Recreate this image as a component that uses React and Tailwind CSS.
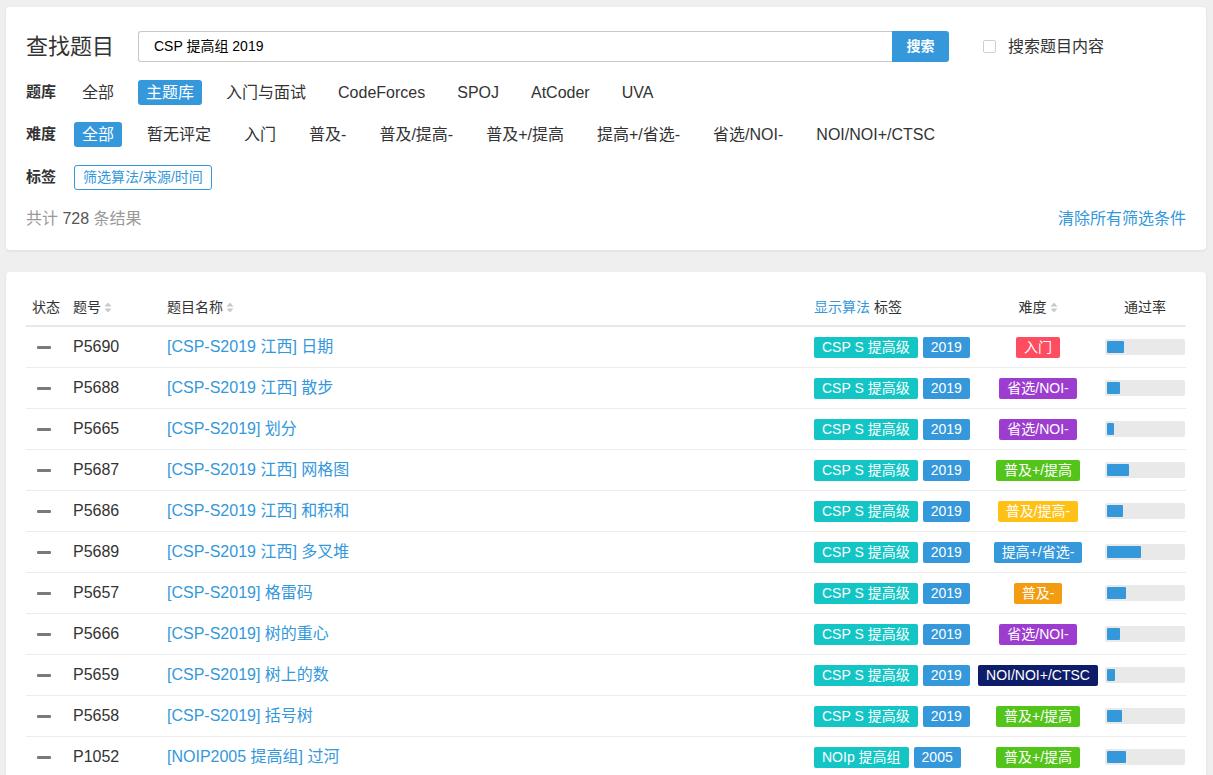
import React from "react";

const FONT = { fontFamily: '"Liberation Sans", "Noto Sans CJK SC", sans-serif' };

const BANKS = ["全部", "主题库", "入门与面试", "CodeForces", "SPOJ", "AtCoder", "UVA"];
const DIFFS = ["全部", "暂无评定", "入门", "普及-", "普及/提高-", "普及+/提高", "提高+/省选-", "省选/NOI-", "NOI/NOI+/CTSC"];

const DIFF_CLASS = {
  "入门": "bg-[#fe4c61]",
  "普及-": "bg-[#f39c11]",
  "普及/提高-": "bg-[#ffc116]",
  "普及+/提高": "bg-[#52c41a]",
  "提高+/省选-": "bg-[#3498db]",
  "省选/NOI-": "bg-[#9d3dcf]",
  "NOI/NOI+/CTSC": "bg-[#0e1d69]",
};

const ROWS = [
  ["P5690", "[CSP-S2019 江西] 日期", "CSP S 提高级", "2019", "入门", 17],
  ["P5688", "[CSP-S2019 江西] 散步", "CSP S 提高级", "2019", "省选/NOI-", 13],
  ["P5665", "[CSP-S2019] 划分", "CSP S 提高级", "2019", "省选/NOI-", 7],
  ["P5687", "[CSP-S2019 江西] 网格图", "CSP S 提高级", "2019", "普及+/提高", 22],
  ["P5686", "[CSP-S2019 江西] 和积和", "CSP S 提高级", "2019", "普及/提高-", 16],
  ["P5689", "[CSP-S2019 江西] 多叉堆", "CSP S 提高级", "2019", "提高+/省选-", 34],
  ["P5657", "[CSP-S2019] 格雷码", "CSP S 提高级", "2019", "普及-", 19],
  ["P5666", "[CSP-S2019] 树的重心", "CSP S 提高级", "2019", "省选/NOI-", 13],
  ["P5659", "[CSP-S2019] 树上的数", "CSP S 提高级", "2019", "NOI/NOI+/CTSC", 8],
  ["P5658", "[CSP-S2019] 括号树", "CSP S 提高级", "2019", "普及+/提高", 15],
  ["P1052", "[NOIP2005 提高组] 过河", "NOIp 提高组", "2005", "普及+/提高", 19],
];

function SortIcon() {
  return (
    <svg width="8" height="11" viewBox="0 0 8 11" className="ml-[3px] shrink-0">
      <path d="M4 0.5 L7.5 4.5 L0.5 4.5 Z" fill="#c8c8c8" />
      <path d="M4 10.5 L7.5 6.5 L0.5 6.5 Z" fill="#c8c8c8" />
    </svg>
  );
}

function Option({ text, active }) {
  return (
    <span
      className={
        "h-[25px] leading-[25px] px-2 rounded-[3px] text-[16px] whitespace-nowrap " +
        (active ? "bg-[#3498db] text-white" : "text-[#333]")
      }
    >
      {text}
    </span>
  );
}

export default function App() {
  return (
    <div className="min-h-screen bg-[#efefef] pt-[7px] px-[6px] pb-[20px]" style={FONT}>
      {/* Search card */}
      <div className="w-[1200px] bg-white rounded-[4px] shadow-[0_1px_3px_rgba(0,0,0,0.08)] px-5 pt-[24px] pb-[19px]">
        <div className="flex items-center h-[31px]">
          <div className="text-[22px] text-[#333] w-[112px] shrink-0 leading-none">查找题目</div>
          <div className="flex h-[31px] w-[811px]">
            <div className="flex-1 border border-[#c8c8c8] border-r-0 rounded-l-[3px] flex items-center pl-[15px] text-[14px] text-[#000]">
              CSP 提高组 2019
            </div>
            <button className="w-[57px] bg-[#3498db] text-white text-[14px] font-bold rounded-r-[3px]">搜索</button>
          </div>
          <div className="ml-[34px] flex items-center">
            <span className="w-[13px] h-[13px] border border-[#cfcfcf] rounded-[2px] bg-white" />
            <span className="ml-[12px] text-[16px] text-[#333]">搜索题目内容</span>
          </div>
        </div>

        <div className="mt-[18px] flex items-center h-[25px]">
          <div className="w-[48px] shrink-0 text-[15px] font-bold text-[#333]">题库</div>
          <div className="flex items-center gap-4">
            {BANKS.map((it, i) => (
              <Option key={it} text={it} active={i === 1} />
            ))}
          </div>
        </div>

        <div className="mt-[17px] flex items-center h-[25px]">
          <div className="w-[48px] shrink-0 text-[15px] font-bold text-[#333]">难度</div>
          <div className="flex items-center gap-[17px]">
            {DIFFS.map((it, i) => (
              <Option key={it} text={it} active={i === 0} />
            ))}
          </div>
        </div>

        <div className="mt-[18px] flex items-center h-[25px]">
          <div className="w-[48px] shrink-0 text-[15px] font-bold text-[#333]">标签</div>
          <span className="h-[25px] leading-[23px] px-[8px] border border-[#3498db] text-[#3498db] rounded-[3px] text-[14px] whitespace-nowrap">
            筛选算法/来源/时间
          </span>
        </div>

        <div className="mt-[16px] h-[25px] flex items-center justify-between text-[16px]">
          <div className="text-[#999]">
            共计 <span className="text-[#555]">728</span> 条结果
          </div>
          <div className="text-[#3498db]">清除所有筛选条件</div>
        </div>
      </div>

      {/* Problem list card */}
      <div className="mt-[22px] w-[1200px] bg-white rounded-[4px] shadow-[0_1px_3px_rgba(0,0,0,0.08)] px-5 pt-[17px]">
        <div className="flex items-center h-[38px] border-b-2 border-[#e8e8e8] text-[14px] text-[#333]">
          <div className="w-[40px] shrink-0 text-center">状态</div>
          <div className="w-[94px] shrink-0 pl-[7px] flex items-center">
            题号<SortIcon />
          </div>
          <div className="w-[647px] shrink-0 pl-[7px] flex items-center">
            题目名称<SortIcon />
          </div>
          <div className="w-[171px] shrink-0 pl-[7px]">
            <span className="text-[#3498db]">显示算法</span> 标签
          </div>
          <div className="w-[120px] shrink-0 flex items-center justify-center">
            难度<SortIcon />
          </div>
          <div className="flex-1 pl-[7px]">
            <div className="w-[80px] text-center">通过率</div>
          </div>
        </div>
        {ROWS.map(([pid, title, src, year, diff, pass]) => (
          <div key={pid} className="flex items-center h-[41px] border-b border-[#ececec]">
            <div className="w-[40px] shrink-0 flex pl-[11px]">
              <span className="w-[14px] h-[3px] bg-[#7a7a7a] rounded-[1px]" />
            </div>
            <div className="w-[94px] shrink-0 pl-[7px] text-[16px] text-[#333]">{pid}</div>
            <div className="w-[647px] shrink-0 pl-[7px] text-[16px] text-[#3498db]">{title}</div>
            <div className="w-[171px] shrink-0 pl-[7px] flex items-center gap-[5px]">
              <span className="h-[21px] leading-[21px] px-2 rounded-[2px] bg-[#13c5c5] text-white text-[14px] whitespace-nowrap">
                {src}
              </span>
              <span className="h-[21px] leading-[21px] px-2 rounded-[2px] bg-[#3498db] text-white text-[14px]">{year}</span>
            </div>
            <div className="w-[120px] shrink-0 flex justify-center">
              <span
                className={
                  "h-[21px] leading-[21px] px-2 rounded-[2px] text-white text-[14px] whitespace-nowrap " +
                  DIFF_CLASS[diff]
                }
              >
                {diff}
              </span>
            </div>
            <div className="flex-1 pl-[7px]">
              <div className="w-[80px] h-[16px] rounded-[2px] bg-[#e9e9e9] p-[2px]">
                <div className="h-[12px] bg-[#3498db] rounded-[1px]" style={{ width: pass + "px" }} />
              </div>
            </div>
          </div>
        ))}
      </div>
    </div>
  );
}
